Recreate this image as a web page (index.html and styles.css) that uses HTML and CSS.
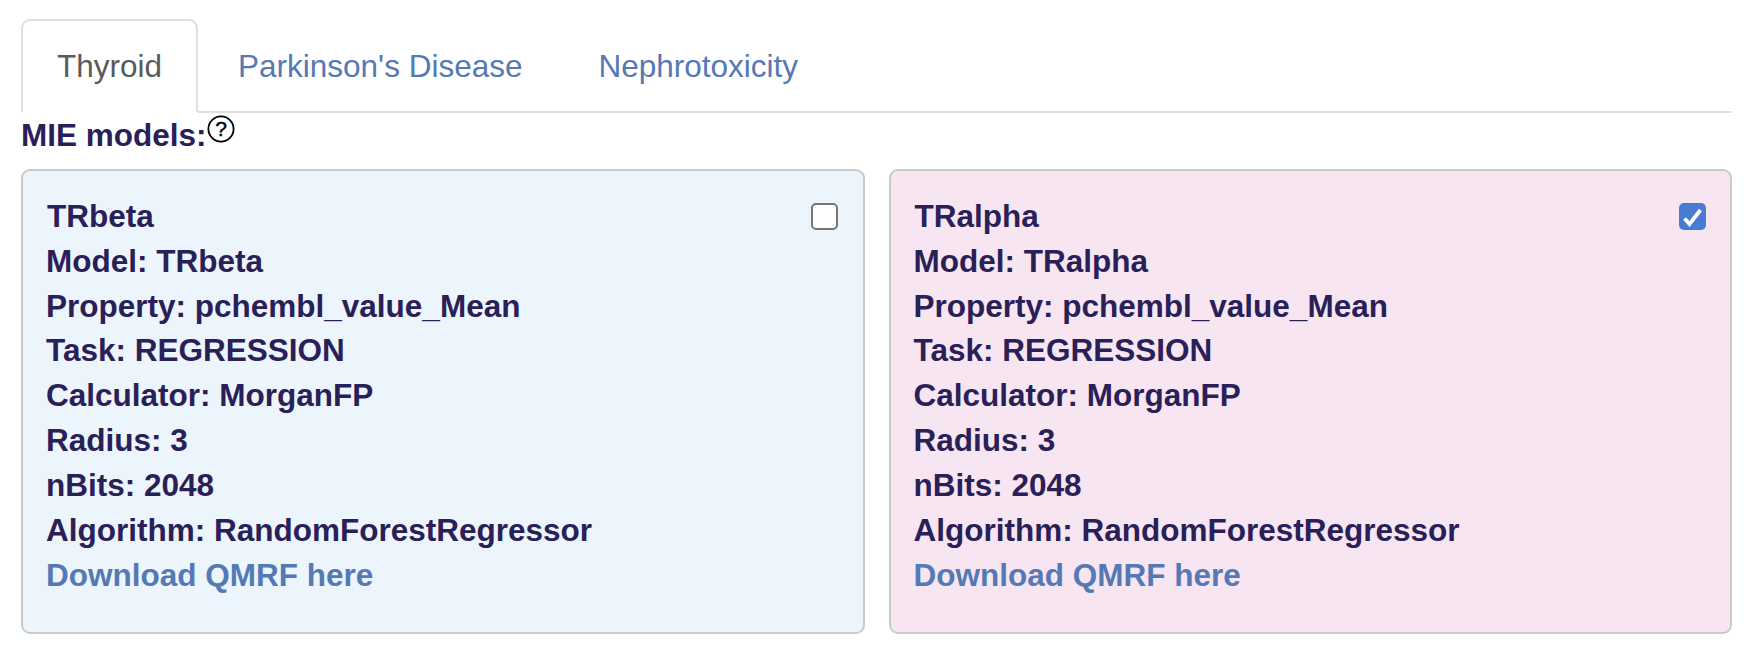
FILE: index.html
```html
<!DOCTYPE html>
<html lang="en">
<head>
<meta charset="utf-8">
<title>MIE models</title>
<link rel="stylesheet" href="styles.css">
</head>
<body>
<main class="page">
  <nav class="tabs">
    <a class="tab tab-active">Thyroid</a>
    <a class="tab">Parkinson's Disease</a>
    <a class="tab">Nephrotoxicity</a>
  </nav>
  <div class="section-title"><span>MIE models:</span><svg class="help" viewBox="0 0 28 28"><circle cx="14" cy="14" r="12.6" fill="#fff" stroke="#000" stroke-width="1.8"/><text x="14" y="21" text-anchor="middle" class="help-mark">?</text></svg></div>
  <section class="cards">
    <article class="card card-blue">
      <div class="card-head"><span>TRbeta</span><span class="check"></span></div>
      <div>Model: TRbeta</div>
      <div>Property: pchembl_value_Mean</div>
      <div>Task: REGRESSION</div>
      <div>Calculator: MorganFP</div>
      <div>Radius: 3</div>
      <div>nBits: 2048</div>
      <div>Algorithm: RandomForestRegressor</div>
      <a class="link">Download QMRF here</a>
    </article>
    <article class="card card-pink">
      <div class="card-head"><span>TRalpha</span><span class="check check-on"><svg viewBox="0 0 27 27"><path d="M5.5 15.5l5 5.5L21.5 7" fill="none" stroke="#fff" stroke-width="3.8"/></svg></span></div>
      <div>Model: TRalpha</div>
      <div>Property: pchembl_value_Mean</div>
      <div>Task: REGRESSION</div>
      <div>Calculator: MorganFP</div>
      <div>Radius: 3</div>
      <div>nBits: 2048</div>
      <div>Algorithm: RandomForestRegressor</div>
      <a class="link">Download QMRF here</a>
    </article>
  </section>
</main>
</body>
</html>
```
FILE: styles.css
```css
* { box-sizing: border-box; }
html, body { margin: 0; background: #fff; }
body {
  font-family: "Liberation Sans", Arial, sans-serif;
  font-size: 31.5px;
  line-height: 44.8px;
  color: #2a2058;
}
.page { padding: 19px 23px 0 21px; }
.tabs { display: flex; border-bottom: 2px solid #dfdfdf; height: 94px; }
.tab {
  font-size: 31.5px;
  line-height: 46px;
  padding: 22px 34px;
  margin-right: 4px;
  height: 94px;
  border: 2px solid transparent;
  border-radius: 9px 9px 0 0;
  color: #5579b5;
}
.tab-active {
  color: #5a5a5a;
  border-color: #dfdfdf #dfdfdf #fff;
  background: #fff;
}
.section-title { display: flex; align-items: flex-start; font-weight: 700; height: 56px; }
.help { width: 28px; height: 28px; margin-top: 2px; }
.help-mark { font-size: 21px; font-weight: 400; fill: #000; stroke: #000; stroke-width: 0.4; font-family: "Liberation Sans", sans-serif; }
.cards { display: grid; grid-template-columns: 1fr 1fr; gap: 24px; }
.card {
  border: 2px solid #cacaca;
  border-radius: 9px;
  height: 465px;
  padding: 23px 25px 22px 23px;
  font-weight: 700;
}
.card-blue { background: #ecf4fc; }
.card-pink { background: #f7e5f2; padding-right: 24px; }
.card-head { display: flex; justify-content: space-between; align-items: center; padding-left: 1px; }
.check {
  width: 27px; height: 27px;
  border: 2px solid #767676;
  border-radius: 5px;
  background: #fff;
  display: block;
}
.check-on { border: 0; background: #4a7bd4; }
.check-on svg { display: block; width: 27px; height: 27px; }
.link { color: #5579b5; display: block; padding-top: 1px; }
```
